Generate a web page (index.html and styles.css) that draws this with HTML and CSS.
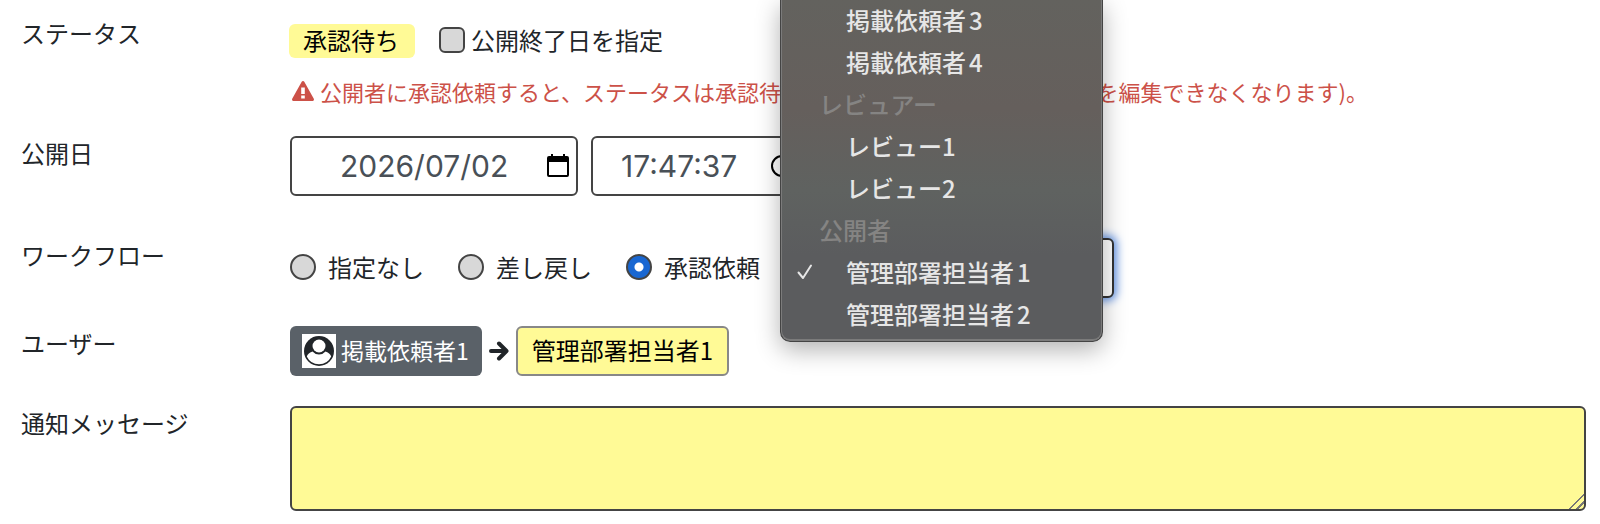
FILE: index.html
```html
<!DOCTYPE html>
<html lang="ja">
<head>
  <meta charset="UTF-8">
  <meta name="viewport" content="width=device-width, initial-scale=1">
  <title>公開設定</title>
  <link rel="stylesheet" href="styles.css">
</head>
<body>
  <form class="form">
    <div class="row">
      <div class="row-label">ステータス</div>
      <div class="row-body status-body">
        <div class="status">
          <span class="badge">承認待ち</span>
          <label class="check"><input type="checkbox" name="end_date">公開終了日を指定</label>
        </div>
        <p class="warning">
          <svg class="warning-icon" viewBox="0 0 22 20" aria-hidden="true">
            <path fill="currentColor" fill-rule="evenodd" d="M9.7 .8a1.5 1.5 0 0 1 2.6 0l9.5 17c.5 1-.2 2.2-1.3 2.2h-19C.4 20-.3 18.800.2 17.800zM9.200 6.500v6.500h3.600V6.500zM9.200 14.500v3h3.600v-3z"/>
          </svg>
          <span>公開者に承認依頼すると、ステータスは承認待ちになります(公開まで記事内容を編集できなくなります)。</span>
        </p>
      </div>
    </div>

    <div class="row">
      <label class="row-label" for="date">公開日</label>
      <div class="row-body dates">
        <div class="picker picker-date">
          <input type="text" id="date" value="2026/07/02">
          <button type="button" aria-label="日付を選択">
            <svg viewBox="0 0 22 24" aria-hidden="true">
              <path fill="currentColor" fill-rule="evenodd" d="M4 0h2v2h10V0h2v2h2a2 2 0 0 1 2 2v17a2 2 0 0 1-2 2H2a2 2 0 0 1-2-2V4a2 2 0 0 1 2-2h2zM2 8v13h18V8z"/>
            </svg>
          </button>
        </div>
        <div class="picker picker-time">
          <input type="text" value="17:47:37" aria-label="公開時刻">
          <button type="button" aria-label="時刻を選択">
            <svg viewBox="0 0 22 24" fill="none" stroke="currentColor" stroke-width="2" aria-hidden="true">
              <circle cx="11" cy="12" r="10"/>
              <path d="M12 6v6l4 3"/>
            </svg>
          </button>
        </div>
      </div>
    </div>

    <div class="row row-workflow">
      <div class="row-label">ワークフロー</div>
      <div class="row-body workflow">
        <label class="radio"><input type="radio" name="workflow" value="none">指定なし</label>
        <label class="radio"><input type="radio" name="workflow" value="back">差し戻し</label>
        <label class="radio"><input type="radio" name="workflow" value="request" checked>承認依頼</label>
        <div class="assignee">
          <select class="assignee-select" aria-label="承認者">
            <option>管理部署担当者1</option>
          </select>
          <!-- 展開中のメニュー -->
          <ul class="menu" role="listbox" aria-label="承認者">
            <li class="item spaced" role="option">掲載依頼者3</li>
            <li class="item spaced" role="option">掲載依頼者4</li>
            <li class="group" role="presentation">レビュアー</li>
            <li class="item" role="option">レビュー1</li>
            <li class="item" role="option">レビュー2</li>
            <li class="group" role="presentation">公開者</li>
            <li class="item spaced" role="option" aria-selected="true">
              <svg class="tick" viewBox="0 0 16 16" fill="none" stroke="currentColor" stroke-width="2" stroke-linecap="round" stroke-linejoin="round" aria-hidden="true"><path d="M1.500 8.500l4.500 5.500L14 1.500"/></svg>管理部署担当者1</li>
            <li class="item spaced" role="option">管理部署担当者2</li>
          </ul>
        </div>
      </div>
    </div>

    <div class="row row-users">
      <div class="row-label">ユーザー</div>
      <div class="row-body users">
        <span class="user user-from">
          <svg class="avatar" viewBox="0 0 34 34" aria-hidden="true">
            <rect width="34" height="34" fill="#fff"/>
            <circle cx="17" cy="17" r="15" fill="#212529"/>
            <path fill="#fff" d="M10.500 17.500C7 18.500 5.500 20.500 4.800 22.500a13.500 13.500 0 0 0 24.400 0C28.500 20.500 27 18.500 23.500 17.500a8.500 8.500 0 0 1-13 0z"/>
            <circle cx="17" cy="12" r="6.500" fill="#fff"/>
          </svg>
          <span class="user-name">掲載依頼者1</span>
        </span>
        <svg class="arrow" viewBox="0 0 20 20" fill="none" stroke="currentColor" stroke-width="4" stroke-linecap="round" stroke-linejoin="round" aria-hidden="true"><path d="M2 10h15M10 2.500l7.500 7.500-7.500 7.500"/></svg>
        <span class="user user-to"><span class="user-name">管理部署担当者1</span></span>
      </div>
    </div>

    <div class="row row-message">
      <label class="row-label" for="message">通知メッセージ</label>
      <div class="row-body">
        <textarea class="message" id="message"></textarea>
      </div>
    </div>
  </form>
</body>
</html>
```
FILE: styles.css
```css
* {
  box-sizing: border-box;
}
body {
  margin: 0;
  background: #fff;
  color: #212529;
  font-family: "Noto Sans CJK JP", sans-serif;
  font-size: 24px;
  line-height: 30px;
}
.form {
  padding: 16px 14px 0 21px;
}
.row {
  display: grid;
  grid-template-columns: 269px minmax(0, 1fr);
  margin-bottom: 30px;
}
.row-label {
  padding-top: 2px;
}
.status-body {
  padding-top: 8px;
}
.status {
  display: flex;
  align-items: center;
  gap: 24px;
}
.badge {
  height: 34px;
  padding: 0 16px 0 14px;
  margin-left: -1px;
  line-height: 32px;
  color: #000;
  background: #fffa96;
  border-radius: 6px;
}
.check {
  display: flex;
  align-items: center;
  gap: 6px;
  padding-bottom: 2px;
}
.check input,
.radio input {
  appearance: none;
  flex: none;
  width: 26px;
  height: 26px;
  margin: 0;
  background: #d8d8d8;
  border: 2px solid #444;
  border-radius: 6px;
}
.warning {
  display: flex;
  align-items: center;
  gap: 6px;
  margin: 20px 0 0;
  padding: 0 0 2px 2px;
  font-size: 22px;
  line-height: 26px;
  color: #cc5148;
  white-space: nowrap;
}
.warning-icon {
  flex: none;
  width: 22px;
  height: 20px;
}

/* 日付・時刻 */
.dates {
  display: flex;
  gap: 13px;
}
.picker {
  display: flex;
  align-items: center;
  height: 60px;
  padding-right: 7px;
  border: 2px solid #444;
  border-radius: 6px;
}
.picker-date {
  width: 288px;
}
.picker-time {
  width: 211px;
}
.picker input {
  flex: 1;
  min-width: 0;
  padding: 0;
  border: 0;
  outline: 0;
  background: none;
  font-family: Inter, sans-serif;
  font-size: 30px;
  color: #495057;
}
.picker-date input {
  padding-left: 48px;
}
.picker-time input {
  padding-left: 28px;
}
.picker button {
  display: flex;
  padding: 0;
  border: 0;
  background: none;
  color: #000;
}
.picker svg {
  width: 22px;
  height: 24px;
}

/* ワークフロー */
.row-workflow {
  margin-top: 42px;
  margin-bottom: 28px;
}
.workflow {
  display: flex;
  align-items: center;
  gap: 34px;
}
.radio {
  display: flex;
  align-items: center;
  gap: 12px;
  padding-bottom: 2px;
  white-space: nowrap;
}
.radio input {
  border-radius: 50%;
}
.radio input:checked {
  background: radial-gradient(circle, #fff 4px, #1967d2 5px);
}
.assignee {
  position: relative;
  width: 334px;
  height: 60px;
  padding-left: 20px;
  margin-left: -14px;
}
.assignee-select {
  appearance: none;
  width: 100%;
  height: 60px;
  padding: 0 14px;
  font: inherit;
  color: #495057;
  background: #fff;
  border: 2px solid #333;
  border-radius: 6px;
  box-shadow: 0 0 8px 3px #6b9bea;
}
.menu {
  position: absolute;
  left: 0;
  right: 11px;
  bottom: -44px;
  z-index: 1;
  margin: 0;
  padding: 0 0 6px;
  list-style: none;
  font-weight: 500;
  line-height: 42px;
  color: #e6e6e6;
  background: linear-gradient(#63625e, #655f5c 32%, #5f6260 56%, #5b5c5e 75%);
  border: 1px solid #444;
  border-top: 0;
  border-radius: 0 0 10px 10px;
  box-shadow: inset 0 -1px 0 1px #7b7b7b, 0 8px 24px rgba(0, 0, 0, 0.3);
}
.item {
  position: relative;
  padding-left: 65px;
}
.spaced {
  text-autospace: normal;
}
.group {
  padding-left: 38px;
  color: #858483;
}
.tick {
  position: absolute;
  left: 16px;
  top: 13px;
  width: 16px;
  height: 16px;
}

/* ユーザー */
.users {
  display: flex;
  align-items: center;
  gap: 7px;
}
.user {
  display: flex;
  align-items: center;
  height: 50px;
  border-radius: 6px;
  white-space: nowrap;
}
.user-from {
  gap: 5px;
  padding: 0 13px 0 12px;
  font-size: 23px;
  color: #fff;
  background: #5a6168;
}
.user-to {
  padding: 0 14px;
  color: #000;
  background: #fffa96;
  border: 2px solid #888;
}
.user-name {
  padding-bottom: 3px;
}
.avatar {
  width: 34px;
  height: 34px;
}
.arrow {
  width: 20px;
  height: 20px;
}

.row-message {
  margin-bottom: 0;
}
.message {
  display: block;
  width: 100%;
  height: 105px;
  padding: 10px;
  font: inherit;
  background: #fffa96;
  border: 2px solid #444;
  border-radius: 6px;
}
.message::-webkit-resizer {
  background: linear-gradient(135deg, transparent 47%, #777 48%, #777 55%, transparent 56%, transparent 72%, #777 73%, #777 80%, transparent 81%);
}
```
